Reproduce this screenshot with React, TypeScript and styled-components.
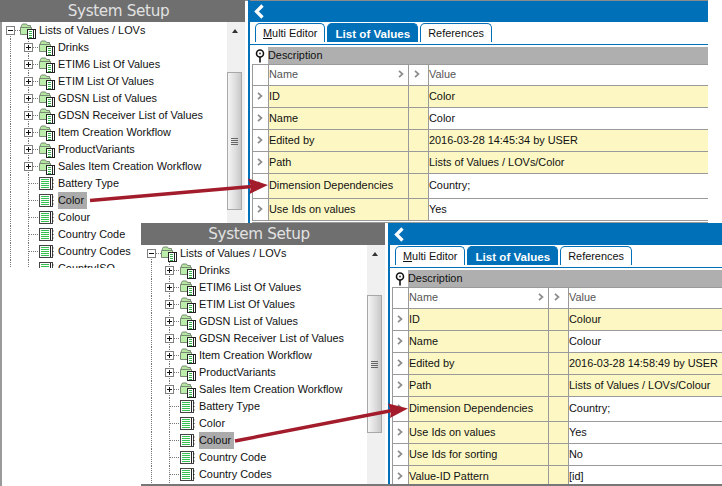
import React from 'react';
import styled, { createGlobalStyle } from 'styled-components';

const UI_FONT = '"Liberation Sans", "Noto Sans", sans-serif';

const GlobalStyle = createGlobalStyle`
  html, body {
    margin: 0;
    padding: 0;
    background: #fff;
  }
`;

const Desktop = styled.div`
  position: relative;
  width: 722px;
  height: 486px;
  overflow: hidden;
  background: #fff;
  box-shadow: inset 2px 0 #9a9a9a;
  font-family: ${UI_FONT};
  font-size: 10.9px;
  color: #111;
`;

// overlapping application windows, their place on the desktop is the content
const Win = styled.section<{ $x: number; $y: number; $w: number; $h: number; $tree: number; $first: boolean }>`
  position: absolute;
  left: ${p => p.$x}px;
  top: ${p => p.$y}px;
  width: ${p => p.$w}px;
  height: ${p => p.$h}px;
  box-sizing: border-box;
  display: grid;
  grid-template-columns: ${p => p.$tree}px 1fr;
  align-items: start;
  overflow: hidden;
  background: ${p => (p.$first ? 'linear-gradient(#8a8a8a, #8a8a8a) top / 100% 1px no-repeat' : '#fff')};
  border-bottom: ${p => (p.$first ? '0' : '2px solid #777')};
`;

const TreePanel = styled.div<{ $edge: boolean }>`
  display: flex;
  flex-direction: column;
  height: 100%;
  box-sizing: border-box;
  background: #fff;
  border-left: ${p => (p.$edge ? '2px solid #9a9a9a' : '0')};
  padding-left: ${p => (p.$edge ? '0' : '2px')};
`;

const Title = styled.h1`
  flex: none;
  height: 22px;
  margin: 0 0 0 -2px;
  padding-right: 8px;
  background: #6f6f6f;
  color: #e2e2e2;
  font: 400 15.2px/22px "DejaVu Sans", sans-serif;
  letter-spacing: -0.35px;
  text-align: center;
`;

const TreeBody = styled.div`
  flex: 1;
  min-height: 0;
  display: flex;
  overflow: hidden;
`;

const TreeList = styled.ul`
  flex: 1;
  margin: 0;
  padding: 0;
  list-style: none;
`;

const TreeRow = styled.li`
  display: flex;
  align-items: center;
  height: 17px;
`;

const Guide = styled.span<{ $half?: boolean; $branch?: boolean }>`
  position: relative;
  flex: none;
  width: 18px;
  height: 17px;
  display: grid;
  place-items: center;

  &::before {
    content: '';
    position: absolute;
    left: 8px;
    top: ${p => (p.$half ? '8px' : '0')};
    bottom: 0;
    border-left: 1px dotted #777;
  }

  &::after {
    content: ${p => (p.$branch ? "''" : 'none')};
    position: absolute;
    left: 9px;
    right: 0;
    top: 8px;
    border-top: 1px dotted #777;
  }
`;

const Expander = styled.span`
  position: relative;
  z-index: 1;
  box-sizing: border-box;
  width: 9px;
  height: 9px;
  margin-left: -1px;
  border: 1px solid #808080;
  background:
    linear-gradient(#111, #111) center / 5px 1px no-repeat,
    #fff;
`;

const ExpanderPlus = styled(Expander)`
  background:
    linear-gradient(#111, #111) center / 5px 1px no-repeat,
    linear-gradient(#111, #111) center / 1px 5px no-repeat,
    #fff;
`;

const IconSlot = styled.span`
  flex: none;
  width: 16px;
  height: 17px;
  margin-left: 1px;
  display: flex;
  align-items: center;
`;

const RootIconSlot = styled(IconSlot)`
  margin-left: 0;
`;

const Label = styled.span<{ $selected?: boolean }>`
  margin-left: 3px;
  height: 17px;
  line-height: 16px;
  white-space: nowrap;
  background: ${p => (p.$selected ? '#ababab' : 'transparent')};
  padding-right: ${p => (p.$selected ? '3px' : '0')};
`;

const Scrollbar = styled.div`
  flex: none;
  width: 18px;
  background: #f0f0f0;
  display: flex;
  flex-direction: column;
  align-items: flex-start;
`;

const ScrollArrow = styled.div`
  height: 17px;
  width: 15px;
  display: grid;
  place-items: center;
  margin-bottom: 33px;

  &::before {
    content: '';
    border: 3px solid transparent;
    border-top: 0;
    border-bottom: 4px solid #333;
  }
`;

const Thumb = styled.div`
  box-sizing: border-box;
  width: 15px;
  height: 138px;
  border: 1px solid #a8a8a8;
  background: linear-gradient(90deg, #f4f4f4, #dcdcdc 60%, #c8c8c8);
  display: flex;
  flex-direction: column;
  justify-content: center;
  align-items: center;
  gap: 1px;
`;

const Grip = styled.i`
  display: block;
  width: 7px;
  height: 1px;
  background: #666;
`;

const DetailPanel = styled.div`
  height: 100%;
  box-sizing: border-box;
  margin-left: 3px;
  display: flex;
  flex-direction: column;
  background: #fff;
  border-left: 2px solid #0070b8;
`;

const Toolbar = styled.div<{ $first: boolean }>`
  flex: none;
  height: 22px;
  box-sizing: border-box;
  border-top: ${p => (p.$first ? '1px solid #8a8a8a' : '0')};
  padding-left: 4px;
  background: #0070b8;
  display: flex;
  align-items: center;
`;

const TabStrip = styled.div`
  flex: none;
  height: 21px;
  margin: 1px 0 0 0;
  padding-left: 5px;
  display: flex;
  gap: 2px;
  border-bottom: 1px solid #0070b8;
`;

const Tab = styled.div<{ $active?: boolean }>`
  box-sizing: border-box;
  height: 19px;
  padding: 0 7px;
  display: flex;
  align-items: center;
  border: 1px solid #0070b8;
  border-bottom-width: 0;
  border-radius: 5px 5px 0 0;
  background: ${p => (p.$active ? '#0070b8' : '#fff')};
  color: ${p => (p.$active ? '#fff' : '#111')};
  font-size: ${p => (p.$active ? 11.6 : 10.9)}px;
  font-weight: ${p => (p.$active ? 700 : 400)};
  white-space: nowrap;
`;

const DescriptionBar = styled.div`
  flex: none;
  margin-top: 2px;
  padding-left: 2px;
  height: 17px;
  display: grid;
  grid-template-columns: 16px 1fr;
`;

const PinSlot = styled.span`
  display: flex;
  align-items: center;
  justify-content: center;
`;

const DescriptionLabel = styled.div`
  background: #afafaf;
  line-height: 17px;
`;

const Table = styled.div`
  flex: 1;
  min-height: 0;
  margin-left: 2px;
  overflow: hidden;
  border-top: 1px solid #9a9a9a;
`;

const Row = styled.div<{ $height: number }>`
  display: grid;
  grid-template-columns: 16px 140px 20px 1fr;
  height: ${p => p.$height}px;
  box-sizing: border-box;
  border-bottom: 1px solid #9a9a9a;
`;

const TableEnd = styled.div`
  height: 1px;
  border-bottom: 1px solid #9a9a9a;
`;

const Cell = styled.div<{ $fill?: boolean; $muted?: boolean }>`
  display: flex;
  align-items: center;
  justify-content: space-between;
  min-width: 0;
  box-sizing: border-box;
  padding-bottom: 2px;
  white-space: nowrap;
  border-left: 1px solid #9a9a9a;
  background: ${p => (p.$fill ? '#fdf8c3' : '#fff')};
  color: ${p => (p.$muted ? '#555' : '#111')};
`;

const Chevron = styled.svg<{ $gap: number }>`
  flex: none;
  width: 6px;
  height: 8px;
  margin: 0 4px 0 ${p => p.$gap}px;
`;

const Underlined = styled.span`
  text-decoration: underline;
`;

const ArrowLayer = styled.svg`
  position: absolute;
  left: 0;
  top: 0;
  width: 722px;
  height: 486px;
  pointer-events: none;
`;

const FolderIcon = () => (
  <svg width="16" height="16" viewBox="0 0 16 16">
    <path d="M1.500 2.500l1-1.500h4l1 1.500h3v2h-9.500z" fill="#b4e6a0" stroke="#7b8a76" />
    <path d="M.5 4.500h11v7h-11z" fill="#bcedaa" stroke="#7b8a76" />
    <rect x="7.500" y="6.500" width="8" height="9" fill="#fff" stroke="#222" />
    <path d="M9 8.500h3M9 10.500h3M9 12.500h3M9 14.500h3" stroke="#35b04a" />
    <path d="M13.500 7v8" stroke="#222" />
  </svg>
);

const ListIcon = () => (
  <svg width="15" height="13" viewBox="0 0 15 13">
    <rect x=".5" y=".5" width="13" height="12" fill="#fff" stroke="#444" />
    <path d="M2 2.500h8M2 4.500h8M2 6.500h8M2 8.500h8M2 10.500h8" stroke="#35c04f" />
    <path d="M11.500 1v11" stroke="#222" />
    <path d="M13 3h1.500M13 6.500h1.500M13 10h1.500" stroke="#222" />
  </svg>
);

const BackIcon = () => (
  <svg width="11" height="15" viewBox="0 0 11 15">
    <path d="M8.500 1.500L2.500 7.500l6 6" fill="none" stroke="#fff" strokeWidth="3.200" />
  </svg>
);

const PinIcon = () => (
  <svg width="10" height="14" viewBox="0 0 10 14">
    <circle cx="5" cy="4.500" r="3.500" fill="#fff" stroke="#111" strokeWidth="1.600" />
    <circle cx="5" cy="4.500" r="1" fill="#444" />
    <path d="M5 8v5.500" stroke="#111" strokeWidth="1.600" />
  </svg>
);

const RowChevron = ({ gap = 4 }: { gap?: number }) => (
  <Chevron viewBox="0 0 6 8" $gap={gap}>
    <path d="M1 .8L4.500 4 1 7.200" fill="none" stroke="#8c8c8c" strokeWidth="1.700" />
  </Chevron>
);

interface FieldRow {
  name: string;
  value: string;
  highlighted?: boolean;
  tall?: boolean;
}

interface WindowSpec {
  x: number;
  y: number;
  w: number;
  h: number;
  tree: number;
  first: boolean;
  selected: string;
  leaves: string[];
  fields: FieldRow[];
}

const folders = [
  'Drinks',
  'ETIM6 List Of Values',
  'ETIM List Of Values',
  'GDSN List of Values',
  'GDSN Receiver List of Values',
  'Item Creation Workflow',
  'ProductVariants',
  'Sales Item Creation Workflow',
];

const fieldsFor = (name: string, stamp: string): FieldRow[] => [
  { name: 'ID', value: name, highlighted: true },
  { name: 'Name', value: name },
  { name: 'Edited by', value: `${stamp} by USER`, highlighted: true },
  { name: 'Path', value: `Lists of Values / LOVs/${name}`, highlighted: true },
  { name: 'Dimension Dependencies', value: 'Country;', tall: true },
  { name: 'Use Ids on values', value: 'Yes' },
];

const windows: WindowSpec[] = [
  {
    x: 0,
    y: 0,
    w: 708,
    h: 268,
    tree: 245,
    first: true,
    selected: 'Color',
    leaves: ['Battery Type', 'Color', 'Colour', 'Country Code', 'Country Codes', 'CountryISO'],
    fields: fieldsFor('Color', '2016-03-28 14:45:34'),
  },
  {
    x: 141,
    y: 223,
    w: 581,
    h: 263,
    tree: 244,
    first: false,
    selected: 'Colour',
    leaves: ['Battery Type', 'Color', 'Colour', 'Country Code', 'Country Codes'],
    fields: [
      ...fieldsFor('Colour', '2016-03-28 14:58:49'),
      { name: 'Use Ids for sorting', value: 'No' },
      { name: 'Value-ID Pattern', value: '[id]' },
    ],
  },
];

const AppWindow = ({ spec }: { spec: WindowSpec }) => (
  <Win $x={spec.x} $y={spec.y} $w={spec.w} $h={spec.h} $tree={spec.tree} $first={spec.first}>
    <TreePanel $edge={spec.first}>
      <Title>System Setup</Title>
      <TreeBody>
        <TreeList>
          <TreeRow>
            <Guide $half $branch>
              <Expander />
            </Guide>
            <RootIconSlot>
              <FolderIcon />
            </RootIconSlot>
            <Label>Lists of Values / LOVs</Label>
          </TreeRow>
          {folders.map(name => (
            <TreeRow key={name}>
              <Guide />
              <Guide $branch>
                <ExpanderPlus />
              </Guide>
              <IconSlot>
                <FolderIcon />
              </IconSlot>
              <Label>{name}</Label>
            </TreeRow>
          ))}
          {spec.leaves.map(name => (
            <TreeRow key={name}>
              <Guide />
              <Guide $branch />
              <IconSlot>
                <ListIcon />
              </IconSlot>
              <Label $selected={name === spec.selected}>{name}</Label>
            </TreeRow>
          ))}
        </TreeList>
        <Scrollbar>
          <ScrollArrow />
          <Thumb>
            <Grip />
            <Grip />
            <Grip />
            <Grip />
          </Thumb>
        </Scrollbar>
      </TreeBody>
    </TreePanel>
    <DetailPanel>
      <Toolbar $first={spec.first}>
        <BackIcon />
      </Toolbar>
      <TabStrip>
        <Tab>
          <span>
            <Underlined>M</Underlined>ulti Editor
          </span>
        </Tab>
        <Tab $active>List of Values</Tab>
        <Tab>References</Tab>
      </TabStrip>
      <DescriptionBar>
        <PinSlot>
          <PinIcon />
        </PinSlot>
        <DescriptionLabel>Description</DescriptionLabel>
      </DescriptionBar>
      <Table>
        <Row $height={21}>
          <Cell />
          <Cell $muted>
            Name
            <RowChevron />
          </Cell>
          <Cell>
            <RowChevron gap={5} />
          </Cell>
          <Cell $muted>Value</Cell>
        </Row>
        {spec.fields.map(field => (
          <Row key={field.name} $height={field.tall ? 25 : 22}>
            <Cell>
              <RowChevron />
            </Cell>
            <Cell $fill>{field.name}</Cell>
            <Cell $fill />
            <Cell $fill={field.highlighted}>{field.value}</Cell>
          </Row>
        ))}
        {spec.first && <TableEnd />}
      </Table>
    </DetailPanel>
  </Win>
);

const App = () => (
  <Desktop>
    <GlobalStyle />
    {windows.map(spec => (
      <AppWindow key={spec.selected} spec={spec} />
    ))}
    <ArrowLayer viewBox="0 0 722 486">
      <path d="M90 200.500L252 186.500" stroke="#a31c2b" strokeWidth="3.500" fill="none" />
      <path d="M268 185L248 178.500L251 186.500L249.500 194z" fill="#a31c2b" />
      <path d="M235 441L392 410.500" stroke="#a31c2b" strokeWidth="3.500" fill="none" />
      <path d="M408 408.500L388 403.500L391 411L390 418z" fill="#a31c2b" />
    </ArrowLayer>
  </Desktop>
);

export default App;
